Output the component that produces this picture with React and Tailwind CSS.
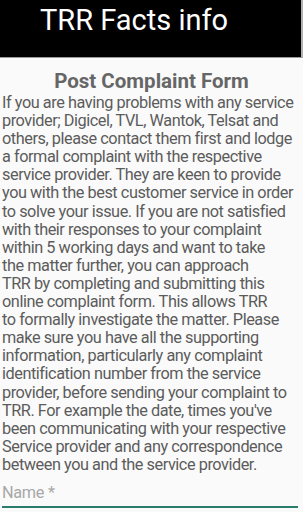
import React from "react";

const lines = [
  "If you are having problems with any service",
  "provider; Digicel, TVL, Wantok, Telsat and",
  "others, please contact them first and lodge",
  "a formal complaint with the respective",
  "service provider. They are keen to provide",
  "you with the best customer service in order",
  "to solve your issue. If you are not satisfied",
  "with their responses to your complaint",
  "within 5 working days and want to take",
  "the matter further, you can approach",
  "TRR by completing and submitting this",
  "online complaint form. This allows TRR",
  "to formally investigate the matter. Please",
  "make sure you have all the supporting",
  "information, particularly any complaint",
  "identification number from the service",
  "provider, before sending your complaint to",
  "TRR. For example the date, times you've",
  "been communicating with your respective",
  "Service provider and any correspondence",
  "between you and the service provider.",
];

export default function App() {
  return (
    <div className="w-[303px] h-[512px] overflow-hidden bg-[#fafafa]" style={{ fontFamily: "Roboto, 'Noto Sans', sans-serif" }}>
      <div className="h-[58px] bg-black border-b border-[#9a9a9a] border-r-2 border-r-[#b0b0b0] flex items-start">
        <div className="pl-[40px] pt-[1px] text-white text-[29px] leading-[38px]">TRR Facts info</div>
      </div>
      <div className="px-[2px]">
        <div className="mt-[10px] text-center text-[#666666] font-bold text-[20.5px] leading-[26px]">Post Complaint Form</div>
        <div className="text-[#5c5c5c] text-[16.3px] tracking-[-0.45px] leading-[18.1px]">
          {lines.map((l, i) => (
            <div key={i} className="whitespace-nowrap">{l}</div>
          ))}
        </div>
        <div className="mt-[9px] mr-[3px] border-b-2 border-[#2a7d6a] pb-[3px]">
          <div className="text-[#a8a8a8] text-[16.3px] tracking-[-0.3px] leading-[20px]">Name *</div>
        </div>
      </div>
    </div>
  );
}
